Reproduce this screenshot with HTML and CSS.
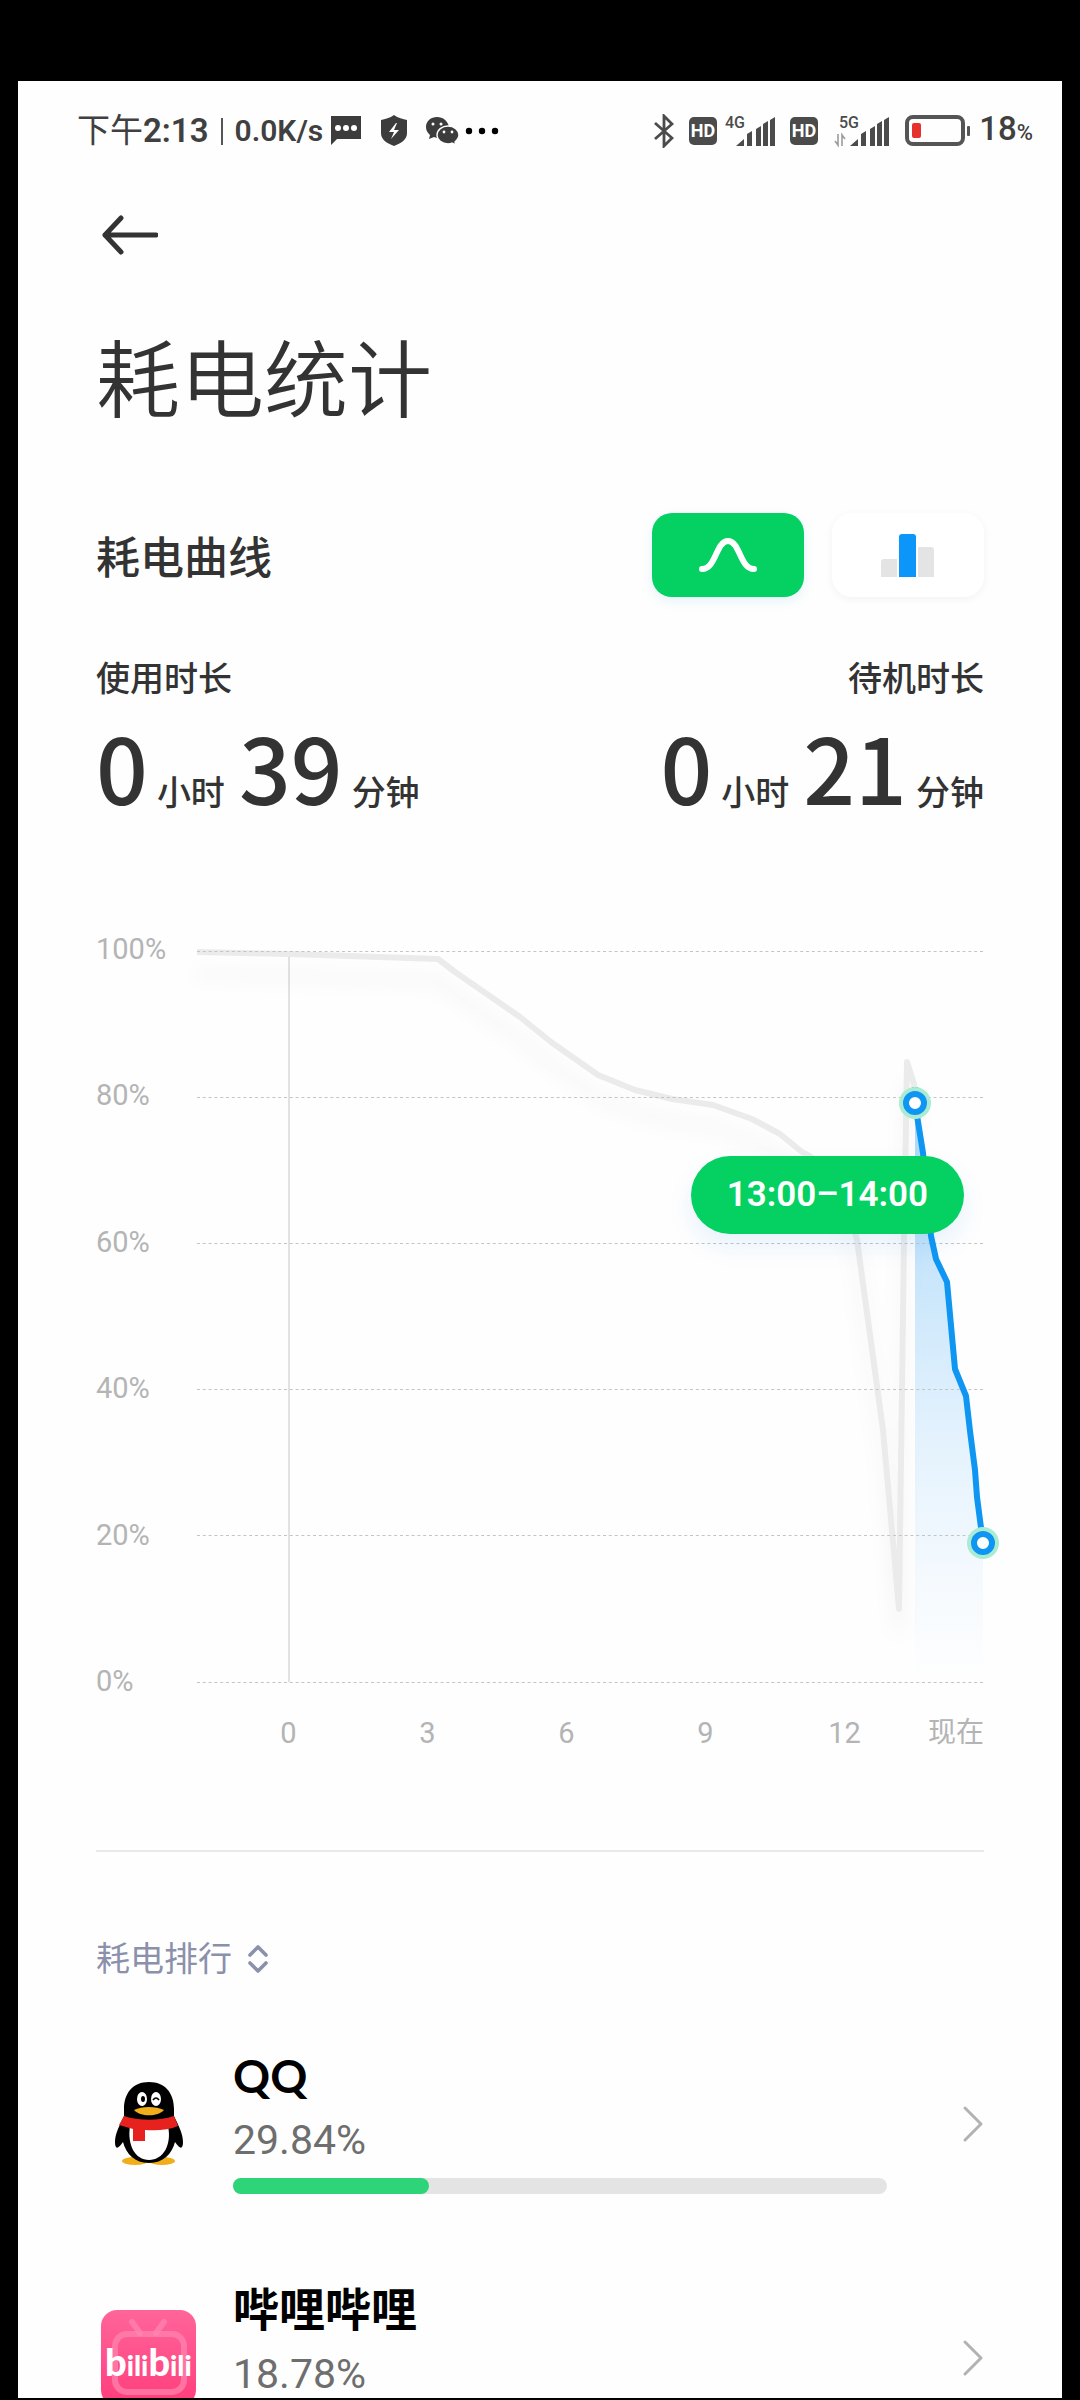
FILE: index.html
```html
<!DOCTYPE html>
<html lang="zh-CN">
<head>
<meta charset="utf-8">
<meta name="viewport" content="width=device-width, initial-scale=1">
<title>耗电统计</title>
<link rel="stylesheet" href="styles.css">
</head>
<body>
<div class="screen">
  <header class="status">
    <div class="status-left">
      <span class="clock">下午<b>2:13</b></span>
      <span class="bar"></span>
      <b class="speed">0.0K/s</b>
      <svg class="icon-message" width="32" height="32" viewBox="0 0 32 32" aria-hidden="true"><path d="M1 1h30v23H7l-6 6z" fill="#3c3c3c"/><circle cx="8" cy="13" r="3" fill="#fff"/><circle cx="16" cy="13" r="3" fill="#fff"/><circle cx="24" cy="13" r="3" fill="#fff"/></svg>
      <svg class="icon-shield" width="26" height="32" viewBox="0 0 26 32" aria-hidden="true"><path d="M13 0C17 3 22 4 26 5V18c0 6-5 10-13 13C5 28 0 24 0 18V5c4-1 9-2 13-5z" fill="#3c3c3c"/><path d="M15 8 8 17h5l-3 7 8-9h-5l3-7z" fill="#fff"/></svg>
      <svg class="icon-wechat" width="34" height="32" viewBox="0 0 34 32" aria-hidden="true"><path d="M11 2C5 2 0 6 0 12c0 4 2 6 4 8l-1 4 5-2c2 1 4 1 5 1 9 0 10-5 10-11C22 6 17 2 11 2z" fill="#3c3c3c"/><path d="M22 11c-6 0-11 4-11 9s5 9 11 9c1 0 3 0 4-1l4 2-1-3c2-2 4-4 4-7 0-5-5-9-11-9z" fill="#3c3c3c" stroke="#fefefe" stroke-width="1.4"/><circle cx="7" cy="9" r="1.5" fill="#fff"/><circle cx="15" cy="9" r="1.5" fill="#fff"/><circle cx="18" cy="17" r="1.4" fill="#fff"/><circle cx="26" cy="17" r="1.4" fill="#fff"/></svg>
      <svg class="icon-more" width="34" height="32" viewBox="0 0 34 32" aria-hidden="true"><circle cx="4" cy="16" r="3.2"/><circle cx="17" cy="16" r="3.2"/><circle cx="30" cy="16" r="3.2"/></svg>
    </div>
    <div class="status-right">
      <svg width="20" height="34" viewBox="0 0 20 34" aria-hidden="true"><path d="M1 9l17 15-8 8V2l8 8L1 25" fill="none" stroke="#4b4b4b" stroke-width="2.8"/></svg>
      <svg class="icon-hd" width="28" height="28" viewBox="0 0 28 28" aria-hidden="true"><rect width="28" height="28" rx="5" fill="#4b4b4b"/><text class="hd" x="14" y="20" text-anchor="middle">HD</text></svg>
      <svg class="icon-4g" width="50" height="40" viewBox="0 -4 50 40" aria-hidden="true"><text class="net" x="0" y="13">4G</text><path d="M11 31h8v-7zM22 31v-12l5-3v15zM31 31v-17l5-3v20zM38 31V9l5-3v25zM45 31V5l5-3v29z" fill="#4b4b4b"/></svg>
      <svg class="icon-hd-2" width="28" height="28" viewBox="0 0 28 28" aria-hidden="true"><rect width="28" height="28" rx="5" fill="#4b4b4b"/><text class="hd" x="14" y="20" text-anchor="middle">HD</text></svg>
      <svg class="icon-5g" width="55" height="40" viewBox="0 -4 55 40" aria-hidden="true"><text class="net" x="5" y="13">5G</text><path d="M4 19v11l-3-4M8 31V20l3 4" fill="none" stroke="#9b9b9b" stroke-width="1.6"/><path d="M16 31h8v-7zM27 31v-12l5-3v15zM36 31v-17l5-3v20zM43 31V9l5-3v25zM50 31V5l5-3v29z" fill="#4b4b4b"/></svg>
      <svg class="icon-battery" width="66" height="32" viewBox="0 0 66 32" aria-hidden="true"><rect x="2" y="2" width="56" height="27" rx="6" fill="none" stroke="#555" stroke-width="4"/><rect x="7" y="8" width="9" height="15" rx="2" fill="#e5322d"/><rect x="62" y="11" width="3" height="10" rx="1" fill="#555"/></svg>
      <span class="level">18<small>%</small></span>
    </div>
  </header>

  <main class="content">
    <button class="back" type="button" aria-label="返回"><svg width="56" height="40" viewBox="0 0 56 40"><path d="M54 20H3M19 3L3 20l16 17" fill="none" stroke="#333" stroke-width="5" stroke-linecap="round" stroke-linejoin="round"/></svg></button>
    <h1>耗电统计</h1>

    <div class="section-head">
      <h2>耗电曲线</h2>
      <div class="switch">
        <button class="mode mode-on" type="button" aria-pressed="true" aria-label="曲线"><svg width="58" height="36" viewBox="0 0 58 36"><path d="M3 32C17 32 17 4 29 4S41 32 55 32" fill="none" stroke="#fff" stroke-width="6" stroke-linecap="round"/></svg></button>
        <button class="mode" type="button" aria-pressed="false" aria-label="柱状图"><svg width="54" height="43" viewBox="0 0 54 43"><path d="M0 43V28q0-3 3-3h13v18zM37 43V13h13q3 0 3 3v27z" fill="#e4e4e4"/><path d="M18 43V3q0-3 3-3h11q3 0 3 3v40z" fill="#0c96fa"/></svg></button>
      </div>
    </div>

    <div class="totals">
      <section class="total">
        <h3>使用时长</h3>
        <p class="duration"><b>0</b><span>小时</span><b class="minutes">39</b><span>分钟</span></p>
      </section>
      <section class="total total-end">
        <h3>待机时长</h3>
        <p class="duration"><b>0</b><span>小时</span><b class="minutes">21</b><span>分钟</span></p>
      </section>
    </div>

    <section class="chart" aria-label="电量曲线">
      <div class="y-axis"><span>100%</span><span>80%</span><span>60%</span><span>40%</span><span>20%</span><span>0%</span></div>
      <div class="plot">
        <svg class="curve" viewBox="0 0 787 732" aria-hidden="true">
          <defs>
            <linearGradient id="area" x1="0" y1="152" x2="0" y2="731" gradientUnits="userSpaceOnUse">
              <stop offset="0" stop-color="#1d98f0" stop-opacity=".38"/>
              <stop offset=".5" stop-color="#3aa5f5" stop-opacity=".17"/>
              <stop offset="1" stop-color="#6bbcff" stop-opacity="0"/>
            </linearGradient>
          </defs>
          <path d="M92 3V731" stroke="#d9d9d9" stroke-width="1.5"/>
          <path class="history" d="M0 1L92 3 241 8 258 21 323 66 354 91 401 124 438 139 475 148 516 154 555 168 583 183 605 201C635 215 650 250 660 289L686 479 702 658 707 290 710 111 717 133 718 152"/>
          <path d="M718 152L726 202 734 285 739 308 750 331 758 418 769 445 778 519 786 592V731H718z" fill="url(#area)"/>
          <path d="M0 .5H787M0 146.500H787M0 292.500H787M0 438.500H787M0 584.500H787M0 731.500H787" stroke="#c4c4c4" stroke-width="1" stroke-dasharray="3 2.8"/>
          <path class="current" d="M718 136L718 152 726 202 734 285 739 308 750 331 758 418 769 445 773 480 778 519 780 546 786 592"/>
          <g>
            <circle cx="718" cy="152" r="16" fill="#a9ecd3"/><circle cx="718" cy="152" r="9" fill="#fff" stroke="#0e96f2" stroke-width="6"/>
            <circle cx="786" cy="592" r="16" fill="#a9ecd3"/><circle cx="786" cy="592" r="9" fill="#fff" stroke="#0e96f2" stroke-width="6"/>
          </g>
        </svg>
        <div class="tip">13:00–14:00</div>
      </div>
      <div class="x-axis"><span>0</span><span>3</span><span>6</span><span>9</span><span>12</span><span class="now">现在</span></div>
    </section>

    <hr>

    <button class="sort" type="button">耗电排行<svg width="20" height="30" viewBox="0 0 20 30" aria-hidden="true"><path d="M2 11l8-8 8 8M2 19l8 8 8-8" fill="none" stroke="#8b90ab" stroke-width="3.6" stroke-linecap="round" stroke-linejoin="round"/></svg></button>

    <ul class="apps">
      <li><a class="app" href="#qq">
        <svg class="app-icon" width="104" height="96" viewBox="0 0 104 96" aria-hidden="true">
          <ellipse cx="39" cy="85" rx="13" ry="4" fill="#f0ae1b"/><ellipse cx="66" cy="85" rx="13" ry="4" fill="#f0ae1b"/>
          <path d="M53 6c-16 0-25 11-25 27v7c-4 9-9 17-9 26 0 6 2 9 8 0 3 12 12 21 26 21s23-9 26-21c6 9 8 6 8 0 0-9-5-17-9-26v-7C78 17 69 6 53 6z" fill="#000"/>
          <path d="M34 50c-3 19 5 34 19 34s23-15 19-34z" fill="#fff"/>
          <path d="M28 40c15 5 35 5 50 0l4 10c-9 4-21 5-33 4v11H37V53l-14-4z" fill="#e7211d"/>
          <ellipse cx="46" cy="23" rx="5" ry="7" fill="#fff"/><ellipse cx="60" cy="23" rx="5" ry="7" fill="#fff"/><ellipse cx="47" cy="23" rx="2" ry="3" fill="#000"/><path d="M57 24q3-4 6 0" fill="none" stroke="#000" stroke-width="1.6"/>
          <path d="M38 34c8-4 22-4 30 0-6 7-24 7-30 0z" fill="#f0ae1b"/>
        </svg>
        <span class="app-info"><strong class="latin">QQ</strong><span class="percent">29.84%</span><span class="track"><span class="fill" style="width:30%"></span></span></span>
        <svg class="go" width="22" height="38" viewBox="0 0 22 38" aria-hidden="true"><path d="M3 3l16 16L3 35" fill="none" stroke="#b2b2b2" stroke-width="3" stroke-linecap="round" stroke-linejoin="round"/></svg>
      </a></li>
      <li><a class="app" href="#bilibili">
        <svg class="app-icon" width="104" height="96" viewBox="0 0 104 96" aria-hidden="true">
          <defs><linearGradient id="pink" x2="0" y2="1"><stop stop-color="#ff659a"/><stop offset="1" stop-color="#ff3d7c"/></linearGradient></defs>
          <rect x="5" width="95" height="96" rx="16" fill="url(#pink)"/>
          <g fill="none" stroke="#ff86b0" stroke-opacity=".7" stroke-width="6" stroke-linecap="round"><rect x="19" y="24" width="69" height="58" rx="12"/><path d="M36 12l8 11M68 12l-8 11"/></g>
          <text class="bili" x="9" y="66"><tspan class="bili-b">b</tspan>ili<tspan class="bili-b">b</tspan>ili</text>
        </svg>
        <span class="app-info"><strong>哔哩哔哩</strong><span class="percent">18.78%</span><span class="track"><span class="fill" style="width:19%"></span></span></span>
        <svg class="go" width="22" height="38" viewBox="0 0 22 38" aria-hidden="true"><path d="M3 3l16 16L3 35" fill="none" stroke="#b2b2b2" stroke-width="3" stroke-linecap="round" stroke-linejoin="round"/></svg>
      </a></li>
    </ul>
  </main>
</div>
</body>
</html>
```
FILE: styles.css
```css
* { box-sizing: border-box; }
body, h1, h2, h3, p, ul { margin: 0; padding: 0; }
ul { list-style: none; }
svg { display: block; flex: none; }
button { border: 0; padding: 0; background: none; font: inherit; color: inherit; cursor: pointer; }

body {
  height: 100vh;
  padding: 81px 18px 2px;
  background: #000;
  color: #333;
  font-family: Roboto, "Noto Sans CJK SC", sans-serif;
  font-size: 28px;
}
.screen { height: 100%; overflow: hidden; background: #fefefe; }

/* status bar */
.status {
  display: flex;
  justify-content: space-between;
  align-items: center;
  height: 100px;
  padding: 0 29px 0 59px;
  color: #404040;
  font-size: 33px;
  line-height: 40px;
}
.status-left, .status-right { display: flex; align-items: center; }
.status b { font-weight: 600; }
.status .speed { font-size: 30px; }
.bar { width: 2px; height: 27px; margin: 0 12px; background: #555; }
.icon-message { margin-left: 7px; }
.icon-shield { margin-left: 19px; }
.icon-wechat { margin-left: 19px; }
.icon-more { margin-left: 5px; }
.icon-hd { margin-left: 15px; }
.icon-4g { margin-left: 8px; }
.icon-hd-2 { margin-left: 15px; }
.icon-5g { margin-left: 16px; }
.icon-battery { margin-left: 16px; }
.hd { font: 700 18px Roboto, sans-serif; fill: #fff; }
.net { font: 500 16px Roboto, sans-serif; fill: #4b4b4b; }
.level { margin-left: 8px; font-weight: 500; }
.level small { font-size: 22px; }

.content { padding: 26px 78px 0; }
.back { display: flex; align-items: center; height: 56px; padding-left: 6px; }
h1 { margin-top: 62px; font-size: 84px; line-height: 100px; font-weight: 350; font-family: "Noto Sans CJK SC", sans-serif; }

.section-head { display: flex; justify-content: space-between; align-items: center; margin-top: 88px; }
h2 { padding-top: 8px; font-size: 44px; line-height: 60px; font-weight: 500; }
.switch { display: flex; gap: 28px; }
.mode {
  display: flex;
  justify-content: center;
  align-items: center;
  width: 152px;
  height: 84px;
  border-radius: 20px;
  background: #fff;
  box-shadow: 0 2px 8px rgba(0, 0, 0, .05);
}
.mode-on { background: #04d162; box-shadow: 0 4px 12px rgba(4, 150, 209, .1); }

.totals { display: flex; justify-content: space-between; margin-top: 60px; font-family: "Noto Sans CJK SC", sans-serif; }
.total-end { text-align: right; }
h3 { font-size: 34px; line-height: 40px; font-weight: 500; }
.duration { display: flex; align-items: baseline; gap: 9px; margin-top: 20px; font-size: 34px; line-height: 96px; font-weight: 500; }
.duration b { font-size: 91px; font-weight: 500; }
.minutes { margin-left: 5px; }

/* chart */
.chart { display: grid; grid-template-columns: 101px 1fr; margin-top: 112px; color: #b4b4b4; font-size: 29px; line-height: 32px; }
.y-axis { display: flex; flex-direction: column; justify-content: space-between; margin: -18px 0 -14px; }
.plot { position: relative; }
.curve { width: 100%; overflow: visible; }
.history { fill: none; stroke: #ebebeb; stroke-width: 6; stroke-linejoin: round; filter: drop-shadow(0 22px 9px rgba(0, 0, 0, .05)); }
.current { fill: none; stroke: #0e96f2; stroke-width: 6; stroke-linejoin: round; }
.tip {
  position: absolute;
  top: 28%;
  right: 20px;
  padding: 0 36px;
  border-radius: 39px;
  background: #04d162;
  color: #fff;
  font-size: 35px;
  font-weight: 600;
  line-height: 78px;
  box-shadow: 0 12px 24px rgba(30, 140, 240, .1);
}
.x-axis { grid-column: 2; display: grid; grid-template-columns: repeat(5, 139fr) 70fr; padding-left: 22px; margin-top: 34px; text-align: center; }
.now { text-align: right; white-space: nowrap; font-size: 28px; }

hr { height: 2px; margin: 101px 0 0; border: 0; background: #e9e9e9; }

.sort { display: flex; align-items: center; gap: 16px; margin-top: 87px; color: #8b90ab; font-size: 34px; line-height: 40px; }

.apps { margin-top: 28px; }
.app { display: flex; align-items: center; height: 234px; color: inherit; text-decoration: none; }
.app-info { flex: 1; display: flex; flex-direction: column; margin: 0 75px 8px 33px; }
.app-info strong { color: #000; font-size: 46px; line-height: 60px; font-weight: 600; }
.app-info .latin { font-family: Lato, sans-serif; font-weight: 700; }
.percent { margin-top: 4px; color: #6e6e6e; font-size: 41px; line-height: 60px; }
.track { height: 16px; margin-top: 8px; border-radius: 8px; background: #e4e4e4; }
.fill { display: block; height: 16px; border-radius: 8px; background: #2ed478; }
.bili { font: 900 28px Lato, sans-serif; fill: #fff; }
.bili-b { font-size: 38px; }
```
